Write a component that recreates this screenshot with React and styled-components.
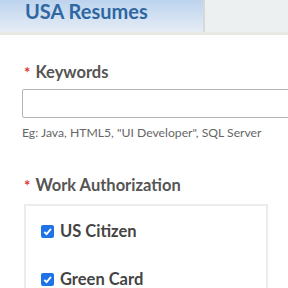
import React from 'react';
import styled, { createGlobalStyle } from 'styled-components';

const Global = createGlobalStyle`
	body {
		margin: 0;
		background: #fff;
		font-family: Lato, "Open Sans", sans-serif;
		overflow: hidden;
	}
`;

const Page = styled.div`
	width: 288px;
	height: 288px;
	overflow: hidden;
`;

const TabBar = styled.div`
	display: flex;
	height: 32px;
	background: #edf0f1;
	border-bottom: 3px solid #e6e8e3;
`;

const Tab = styled.div`
	width: 205px;
	padding: 0 0 0 25px;
	box-sizing: border-box;
	line-height: 22px;
	background: ${p => (p.active ? 'linear-gradient(#bcd3ee, #e6edf5)' : 'transparent')};
	border-right: ${p => (p.active ? '2px solid #d4d9dc' : 'none')};
	color: #2f67a3;
	font-weight: 700;
	font-size: 20px;
`;

const Form = styled.div`
	padding: 27px 0 0 22px;
	display: flex;
	flex-direction: column;
`;

const Label = styled.div`
	color: #555;
	font-weight: 700;
	font-size: 16.5px;
	margin-left: 2px;
	display: flex;
	align-items: baseline;
	gap: 5px;
`;

const Star = styled.span`
	color: #d33;
	font-size: 15px;
`;

const TextInput = styled.input`
	margin-top: 7px;
	width: 300px;
	height: 29px;
	box-sizing: border-box;
	border: 1px solid #b3b3b3;
	border-radius: 2px;
	outline: none;
`;

const Hint = styled.div`
	margin-top: 7px;
	color: #666;
	font-size: 12.2px;
`;

const Section = styled.div`
	margin-top: ${p => p.gap}px;
	display: flex;
	flex-direction: column;
`;

const CheckBox = styled.div`
	margin: 9px 0 0 2px;
	width: 244px;
	height: 120px;
	border: 2px solid #ececec;
	box-sizing: border-box;
	padding: 15px 0 0 15px;
	display: flex;
	flex-direction: column;
	gap: 28px;
`;

const Option = styled.label`
	display: flex;
	align-items: center;
	gap: 6px;
	color: #444;
	font-weight: 700;
	font-size: 16.5px;
`;

const Tick = styled.span`
	width: 13px;
	height: 13px;
	border-radius: 2px;
	background: #1f72e8;
	display: flex;
	align-items: center;
	justify-content: center;
`;

const Check = ({ label }) => (
	<Option>
		<Tick>
			<svg width="11" height="11" viewBox="0 0 12 12">
				<path d="M2.5 6.3 L5 8.8 L9.8 3.2" fill="none" stroke="#fff" strokeWidth="2" />
			</svg>
		</Tick>
		{label}
	</Option>
);

export default function App() {
	return (
		<Page>
			<Global />
			<TabBar>
				<Tab active>USA Resumes</Tab>
			</TabBar>
			<Form>
				<Label>
					<Star>*</Star>Keywords
				</Label>
				<TextInput type="text" />
				<Hint>Eg: Java, HTML5, "UI Developer", SQL Server</Hint>
				<Section gap={35}>
					<Label>
						<Star>*</Star>Work Authorization
					</Label>
					<CheckBox>
						<Check label="US Citizen" />
						<Check label="Green Card" />
					</CheckBox>
				</Section>
			</Form>
		</Page>
	);
}
